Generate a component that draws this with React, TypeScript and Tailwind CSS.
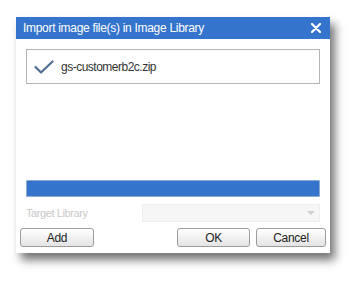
import React from 'react';

function Btn({ label, className }: { label: string; className?: string }) {
  return (
    <button
      className={
        'h-[19px] rounded-[3px] border border-[#9c9c9c] bg-gradient-to-b from-white to-[#e4e4e4] text-[12px] tracking-[-0.3px] leading-none text-[#222] ' +
        (className ?? '')
      }
    >
      {label}
    </button>
  );
}

export default function App() {
  return (
    <div className="w-[362px] h-[284px] bg-white pt-[17px] pl-[16px]" style={{ fontFamily: '"Liberation Sans", Arial, sans-serif' }}>
      <div className="w-[314px] bg-white shadow-[5px_7px_9px_rgba(0,0,0,0.55)]">
        {/* title bar */}
        <div className="h-[22px] bg-[#3574cc] flex items-center justify-between pl-[7px] pr-[9px]">
          <span className="text-white text-[12px] tracking-[-0.3px]">Import image file(s) in Image Library</span>
          <svg width="10" height="10" viewBox="0 0 10 10">
            <path d="M1 1L9 9M9 1L1 9" stroke="white" strokeWidth="2.2" strokeLinecap="round" />
          </svg>
        </div>

        <div className="px-[4px] pt-[10px] pb-[6px]">
          {/* file list */}
          <div className="mx-[6px] h-[35px] border border-[#b4b4b4] flex items-center pl-[7px] gap-[7px]">
            <svg width="20" height="14" viewBox="0 0 20 14">
              <path d="M1.5 7L7 12.5L18.5 1.5" fill="none" stroke="#4f6f95" strokeWidth="2.2" strokeLinecap="round" strokeLinejoin="round" />
            </svg>
            <span className="text-[12px] tracking-[-0.5px] text-[#333]">gs-customerb2c.zip</span>
          </div>

          <div className="h-[96px]" />

          {/* progress */}
          <div className="mx-[6px] h-[17px] bg-[#3574cc] border border-[#8ea9cf] rounded-[1px]" />

          {/* target library */}
          <div className="mx-[6px] mt-[7px] flex items-center justify-between">
            <span className="text-[11px] tracking-[-0.4px] text-[#c9c9c9]">Target Library</span>
            <div className="w-[178px] h-[18px] bg-[#f6f6f6] border border-[#eeeeee] flex items-center justify-end pr-[4px]">
              <svg width="8" height="5" viewBox="0 0 8 5">
                <path d="M0 0H8L4 4Z" fill="#cfcfcf" />
              </svg>
            </div>
          </div>

          {/* buttons */}
          <div className="mt-[6px] flex items-center">
            <Btn label="Add" className="w-[74px]" />
            <div className="flex-1" />
            <Btn label="OK" className="w-[73px]" />
            <Btn label="Cancel" className="w-[70px] ml-[6px]" />
          </div>
        </div>
      </div>
    </div>
  );
}
